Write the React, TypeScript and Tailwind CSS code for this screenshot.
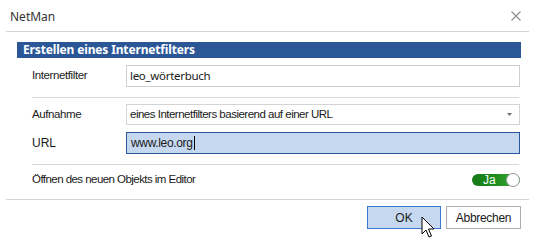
import React from "react";

export default function App() {
  const ui = { fontFamily: '"Liberation Sans", Arial, sans-serif' };
  const seg = { fontFamily: '"Noto Sans", "Open Sans", sans-serif' };
  return (
    <div className="relative w-[539px] h-[245px] bg-white text-[#1a1a1a] overflow-hidden" style={ui}>
      {/* title bar */}
      <div className="flex items-center justify-between h-[31px] pl-[10px] pr-[18px]">
        <span className="text-[12px] text-[#333] leading-none mt-[2px]" style={seg}>NetMan</span>
        <svg width="10" height="10" viewBox="0 0 10 10" className="mt-[1px]">
          <path d="M0.5 0.5 L9.5 9.5 M9.5 0.5 L0.5 9.5" stroke="#8a8a8a" strokeWidth="1.1" />
        </svg>
      </div>
      <div className="ml-[6px] mr-[10px] h-px bg-[#d4d4d4]" />

      <div className="ml-[17px] mr-[18px] mt-[10px]">
        <div className="h-[16px] bg-[#2b5797] flex items-center pl-[6px]">
          <span className="text-white font-bold text-[12px] leading-none tracking-[-0.15px]" style={seg}>Erstellen eines Internetfilters</span>
        </div>

        <div className="pl-[15px] pr-[1px]">
          <div className="flex items-center mt-[7px] h-[22px]">
            <span className="w-[94px] text-[11.5px] tracking-[-0.4px]">Internetfilter</span>
            <div className="flex-1 h-[22px] border border-[#cfcfcf] flex items-center pl-[3px] text-[11.5px] tracking-[-0.3px]" style={seg}>
              leo_wörterbuch
            </div>
          </div>

          <div className="mt-[10px] mr-[1px] h-px bg-[#d8d8d8]" />

          <div className="flex items-center mt-[6px] h-[21px]">
            <span className="w-[94px] text-[11.5px] tracking-[-0.4px]">Aufnahme</span>
            <div className="flex-1 h-[21px] border border-[#d4d4d4] flex items-center justify-between pl-[3px] pr-[7px] text-[11.5px] tracking-[-0.5px]">
              <span>eines Internetfilters basierend auf einer URL</span>
              <svg width="5" height="3" viewBox="0 0 5 3"><path d="M0 0 H5 L2.5 3 Z" fill="#707070" /></svg>
            </div>
          </div>

          <div className="flex items-center mt-[7px] h-[22px]">
            <span className="w-[94px] text-[12px]">URL</span>
            <div className="flex-1 h-[22px] border border-[#2b579a] bg-[#c6d8ef] flex items-center pl-[4px] text-[12px] tracking-[-0.35px]">
              <span>www.leo.org</span>
              <span className="w-px h-[14px] bg-black ml-px" />
            </div>
          </div>

          <div className="mt-[10px] mr-[1px] h-px bg-[#d8d8d8]" />

          <div className="flex items-center justify-between mt-[8px] h-[14px]">
            <span className="text-[11.5px] tracking-[-0.55px]">Öffnen des neuen Objekts im Editor</span>
            <div className="relative w-[48px] h-[12px] rounded-full bg-gradient-to-r from-[#177a17] via-[#1e8c1e] to-[#3cb43c] flex items-center">
              <span className="text-white text-[12px] leading-none ml-[11px]">Ja</span>
              <div className="absolute right-0 top-[-1px] w-[14px] h-[14px] rounded-full bg-white border border-[#9a9a9a]" />
            </div>
          </div>
        </div>
      </div>

      <div className="ml-[6px] mr-[10px] mt-[12px] h-px bg-[#d4d4d4]" />

      <div className="flex justify-end gap-[5px] mt-[6px] pr-[18px]">
        <div className="w-[74px] h-[23px] bg-[#c6d8ef] border border-[#3b78d0] flex items-center justify-center text-[12px]">OK</div>
        <div className="w-[75px] h-[23px] bg-white border border-[#adadad] flex items-center justify-center text-[12px] tracking-[-0.3px]">Abbrechen</div>
      </div>

      {/* mouse cursor */}
      <svg className="absolute left-[421px] top-[216px]" width="14" height="24" viewBox="0 0 14 24">
        <path d="M1 1 L1 18 L5 14 L8 21 L10.5 20 L7.5 13 L13 13 Z" fill="white" stroke="black" strokeWidth="1" strokeLinejoin="miter" />
      </svg>
    </div>
  );
}
